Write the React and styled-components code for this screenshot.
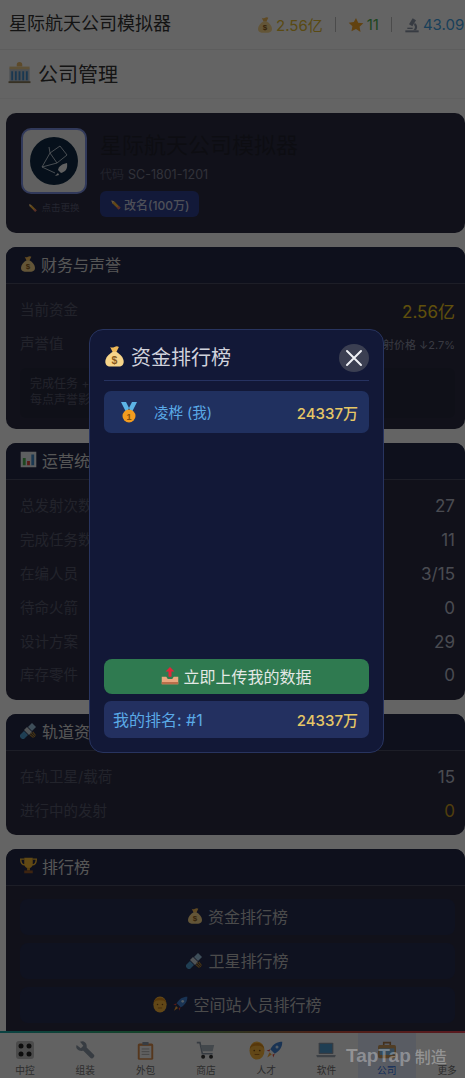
import React from 'react'
import styled, { createGlobalStyle } from 'styled-components'

const FONT = `Inter, "Noto Sans CJK SC", "Noto Sans", sans-serif`

const Global = createGlobalStyle`
  html, body { margin: 0; padding: 0; background: #fafafa; }
  body { font-family: ${FONT}; width: 465px; height: 1078px; overflow: hidden; }
  * { box-sizing: border-box; }
`

const Page = styled.div`
  position: relative;
  width: 465px;
  height: 1078px;
  overflow: hidden;
  display: flex;
  flex-direction: column;
  background: #fafafa;
`
const TopBar = styled.header`
  height: 50px;
  flex: none;
  display: flex;
  align-items: center;
  padding: 0 0 0 9px;
  gap: 26px;
  border-bottom: 1px solid #e8e8e8;
  white-space: nowrap;
`
const AppName = styled.h1`
  margin: 0 0 1px;
  font-size: 18px;
  font-weight: 400;
  color: #333;
  line-height: 26px;
  flex: none;
  width: 222px;
`
const Stats = styled.div`
  display: flex;
  align-items: center;
  flex: none;
`
const Stat = styled.span`
  display: inline-flex;
  align-items: center;
  gap: 3px;
  font-size: 15px;
  color: ${p => p.$color};
`
const StatSep = styled.i`
  width: 1px;
  height: 15px;
  background: #bbb;
  margin: 0 12px;
`
const PageTitle = styled.div`
  height: 49px;
  flex: none;
  display: flex;
  align-items: center;
  gap: 7px;
  padding: 0 0 2px 8px;
  font-size: 20px;
  font-weight: 400;
  color: #333;
  border-bottom: 1px solid #efefef;
`
const Content = styled.main`
  flex: 1;
  min-height: 0;
  padding: 14px 0 0 6px;
  display: flex;
  flex-direction: column;
  gap: 14px;
  overflow: hidden;
`
const Card = styled.section`
  flex: none;
  background: #2b2c42;
  border-radius: 10px;
  overflow: hidden;
  height: ${p => p.$h}px;
`
const CardHead = styled.div`
  height: 37px;
  display: flex;
  align-items: center;
  gap: 5px;
  padding: 0 14px 3px;
  font-size: 16px;
  font-weight: 400;
  color: #d8d8d8;
  background: #252a48;
  border-bottom: 1px solid #4a4c63;
`
const CardBody = styled.div`
  padding: ${p => p.$pad || '9.5px 10px 0 14px'};
`
const Row = styled.div`
  height: 33.8px;
  display: flex;
  align-items: center;
  justify-content: space-between;
`
const RowLabel = styled.span`
  font-size: 14.5px;
  color: #56586c;
  margin-bottom: 3px;
`
const RowValue = styled.span`
  font-size: 17px;
  color: ${p => p.$color || '#b9bccb'};
`
const SmallValue = styled.span`
  font-size: 11px;
  color: #8e90a4;
`
const Note = styled.div`
  margin-top: 7px;
  padding: 8px 10px;
  height: 50px;
  border-radius: 6px;
  background: #27293e;
  font-size: 12px;
  line-height: 16px;
  color: #56586c;
`
const Profile = styled.div`
  display: flex;
  gap: 13px;
  padding: 15px;
`
const LogoCol = styled.div`
  display: flex;
  flex-direction: column;
  align-items: center;
  gap: 3px;
  flex: none;
`
const LogoBox = styled.div`
  width: 66px;
  height: 66px;
  border-radius: 10px;
  background: #f1f1f1;
  border: 2px solid #7b8fe0;
  display: flex;
  align-items: center;
  justify-content: center;
`
const Hint = styled.span`
  display: inline-flex;
  align-items: center;
  gap: 4px;
  font-size: 9.5px;
  color: #5c5e78;
  margin-top: 3px;
`
const Info = styled.div`
  display: flex;
  flex-direction: column;
  align-items: flex-start;
  padding-top: 1px;
`
const CompanyName = styled.div`
  font-size: 22px;
  font-weight: 400;
  line-height: 32px;
  color: #22222f;
`
const Code = styled.div`
  font-size: 12px;
  line-height: 18px;
  margin-top: 5px;
  color: #55576e;
  b { font-weight: 400; font-size: 12.5px; color: #7b7d90; margin-left: 4px; }
`
const Rename = styled.div`
  margin-top: 7px;
  height: 26px;
  padding: 0 10px;
  border-radius: 6px;
  display: inline-flex;
  align-items: center;
  gap: 3px;
  background: #2e3f8f;
  font-size: 12px;
  font-weight: 500;
  color: #c4c8dc;
`
const RankButton = styled.div`
  height: 36px;
  margin-bottom: 8px;
  padding-bottom: 2px;
  border-radius: 8px;
  background: #262d52;
  display: flex;
  align-items: center;
  justify-content: center;
  gap: 5px;
  font-size: 16px;
  font-weight: 400;
  color: #bbb;
`
const TabBar = styled.nav`
  position: relative;
  height: 47px;
  flex: none;
  display: flex;
  gap: 2.3px;
  background: #f5f5f5;
  &::before {
    content: '';
    position: absolute;
    left: 0;
    right: 0;
    top: 0;
    height: 2px;
    background: linear-gradient(90deg, #1aa6a6, #3aa860 35%, #c2503c 70%, #e04050);
  }
`
const Tab = styled.div`
  flex: 0 0 58px;
  display: flex;
  flex-direction: column;
  align-items: center;
  justify-content: flex-end;
  gap: 2px;
  padding-bottom: 1px;
  font-size: 9.7px;
  color: ${p => (p.$active ? '#2f6fe0' : '#6f6f6f')};
  background: ${p => (p.$active ? '#dfe6f7' : 'transparent')};
  &:first-child { margin-left: -4px; }
`
const TabIcon = styled.div`
  height: 22px;
  display: flex;
  align-items: center;
  justify-content: center;
`
const Watermark = styled.div`
  position: absolute;
  left: 346px;
  bottom: 10px;
  display: flex;
  align-items: center;
  gap: 4px;
  color: rgba(255, 255, 255, 0.32);
  font-family: "Liberation Sans", "Noto Sans CJK SC", sans-serif;
  font-weight: 700;
  font-size: 19px;
  white-space: nowrap;
  span { font-size: 16px; font-weight: 500; }
`
const Overlay = styled.div`
  position: absolute;
  inset: 0;
  background: rgba(0, 0, 0, 0.6);
  display: flex;
  justify-content: center;
  padding-top: 329px;
  padding-left: 8px;
`
const Modal = styled.div`
  width: 295px;
  height: 424px;
  display: flex;
  flex-direction: column;
  padding: 9px 14px 14px;
  background: #121837;
  border: 1px solid #28345f;
  border-radius: 14px;
`
const ModalHead = styled.div`
  height: 42px;
  flex: none;
  display: flex;
  align-items: center;
  justify-content: space-between;
  border-bottom: 1px solid #263260;
  padding-bottom: 4px;
`
const ModalTitle = styled.div`
  display: flex;
  align-items: center;
  gap: 6px;
  font-size: 20px;
  font-weight: 400;
  color: #d0d2dc;
  padding-bottom: 2px;
`
const Close = styled.div`
  width: 30px;
  height: 28px;
  border-radius: 50%;
  background: #3b3f52;
  display: flex;
  align-items: center;
  justify-content: center;
`
const RankList = styled.div`
  flex: 1;
  padding-top: 10px;
`
const RankRow = styled.div`
  height: ${p => p.$h}px;
  display: flex;
  align-items: center;
  padding: 0 11px 0 ${p => p.$left}px;
  border-radius: 7px;
  background: ${p => p.$bg};
  color: #5aa9e6;
`
const RankName = styled.span`
  flex: 1;
  font-size: ${p => p.$size}px;
  font-weight: 400;
  margin-left: ${p => p.$gap}px;
  margin-bottom: 2px;
`
const RankAmount = styled.span`
  font-size: 15px;
  font-weight: 500;
  color: #e6c766;
`
const Upload = styled.div`
  height: 35px;
  flex: none;
  margin-bottom: 7px;
  padding-bottom: 2px;
  border-radius: 8px;
  background: #2f7a50;
  display: flex;
  align-items: center;
  justify-content: center;
  gap: 4px;
  font-size: 16px;
  font-weight: 400;
  color: #e3e8e5;
`

const Bag = ({ s = 16 }) => (
  <svg width={s} height={s} viewBox="0 0 24 24">
    <path d="M7 1c1.500 1 3 1 5 0s3.500-1 5 0l-3 6h-4z" fill="#f0b957" />
    <path d="M10 6.500h4c5 3 8.500 7 8.500 11.500 0 3-2 5.500-5.500 5.500H7c-3.500 0-5.500-2.500-5.500-5.500C1.500 13.500 5 9.500 10 6.500z" fill="#f7d58a" />
    <text x="12" y="20" fontSize="12" fontWeight="700" textAnchor="middle" fill="#8a5a1c" fontFamily="Liberation Sans">$</text>
  </svg>
)
const Star = () => (
  <svg width="16" height="16" viewBox="0 0 24 24">
    <path d="M12 1.500l3.300 7 7.700 1-5.600 5.300 1.400 7.700L12 18l-6.800 3.500 1.400-7.700L1 8.500l7.700-1z" fill="#f4a62a" />
  </svg>
)
const Microscope = () => (
  <svg width="16" height="16" viewBox="0 0 24 24" fill="#8a94a6">
    <path d="M13 2l5 3-5.500 9-5-3z" />
    <path d="M2 20h20v3H2z" />
    <path d="M16 9c4 2 5 7 2 11h-4c3-3 3-6 1-8z" />
    <path d="M5 16h8v2H5z" />
  </svg>
)
const Building = () => (
  <svg width="23" height="22" viewBox="0 0 24 24">
    <path d="M9 3a3 3 0 0 1 6 0v2H9z" fill="#e8b96a" />
    <path d="M1 7h22v15H1z" fill="#b9c2cc" />
    <path d="M1 5h22v3H1z" fill="#e7c88a" />
    <path d="M3 10h2v10H3zM7 10h2v10H7zM11 10h2v10h-2zM15 10h2v10h-2zM19 10h2v10h-2z" fill="#3f8bc9" />
    <path d="M0 21h24v2H0z" fill="#8a7a5a" />
  </svg>
)
const Pencil = ({ s = 11 }) => (
  <svg width={s} height={s} viewBox="0 0 24 24">
    <path d="M3 3l6 2 14 14-4 4L5 9z" fill="#f5b33c" />
    <path d="M3 3l6 2-4 4z" fill="#f2d6a8" />
    <path d="M19 15l4 4-4 4-4-4z" fill="#e2706a" />
  </svg>
)
const Medal = () => (
  <svg width="18" height="21" viewBox="0 0 18 21">
    <path d="M1 0h5l4 8-4 2zM17 0h-5L8 8l4 2z" fill="#5db4e6" />
    <circle cx="9" cy="14" r="6.500" fill="#f39c1f" />
    <text x="9" y="17.500" fontSize="9" fontWeight="700" textAnchor="middle" fill="#8a4f08" fontFamily="Liberation Sans">1</text>
  </svg>
)
const Tray = () => (
  <svg width="18" height="18" viewBox="0 0 24 24">
    <path d="M12 0l6 6h-4v7h-4V6H6z" fill="#e0263a" />
    <path d="M1 13h6l2 3h6l2-3h6v10H1z" fill="#e9a77e" />
    <path d="M1 20h22v3H1z" fill="#b96f4a" />
  </svg>
)
const Satellite = ({ s = 17 }) => (
  <svg width={s} height={s} viewBox="0 0 24 24">
    <g transform="rotate(-45 12 12)">
      <rect x="-3" y="8" width="10" height="8" fill="#4f9bd0" />
      <rect x="8" y="7" width="6" height="10" fill="#c9d2da" />
      <rect x="15" y="8" width="8" height="8" fill="#9cc4de" />
    </g>
    <path d="M15 15l6 6M18 14l4 5M14 18l5 4" stroke="#b9862c" strokeWidth="1.500" />
  </svg>
)
const Trophy = () => (
  <svg width="17" height="17" viewBox="0 0 24 24">
    <path d="M6 1h12v9a6 6 0 0 1-12 0z" fill="#f2b632" />
    <path d="M6 3H1c0 5 2 8 6 8M18 3h5c0 5-2 8-6 8" fill="none" stroke="#f2b632" strokeWidth="2" />
    <path d="M10 15h4v4h-4z" fill="#d89a20" />
    <path d="M6 19h12v4H6z" fill="#9a5a2a" />
  </svg>
)
const Chart = () => (
  <svg width="17" height="17" viewBox="0 0 24 24">
    <path d="M1 1h22v22H1z" fill="#e9edf0" />
    <path d="M4 10h4v10H4z" fill="#4caf50" />
    <path d="M10 14h4v6h-4z" fill="#e0453a" />
    <path d="M16 5h4v15h-4z" fill="#3f8bc9" />
  </svg>
)
const Face = ({ w = 16, h = 19 }) => (
  <svg width={w} height={h} viewBox="0 0 20 24">
    <ellipse cx="10" cy="12" rx="9.500" ry="11.500" fill="#f4b23a" />
    <path d="M1 10C2 0 18 0 19 10c-2-3-4-4-9-4s-7 1-9 4z" fill="#d98a1a" />
    <circle cx="6.500" cy="12" r="1.100" fill="#7a4a10" />
    <circle cx="13.500" cy="12" r="1.100" fill="#7a4a10" />
    <path d="M7 17h6" stroke="#a8651a" strokeWidth="1.200" />
  </svg>
)
const Rocket = ({ s = 18 }) => (
  <svg width={s} height={s} viewBox="0 0 24 24">
    <path d="M23 1c-7 0-12 3-16 10l6 6c7-4 10-9 10-16z" fill="#3f7fd0" />
    <circle cx="16" cy="8" r="2" fill="#cfe6fa" />
    <path d="M7 11l-5 2 4 1zM13 17l-2 5-1-4z" fill="#e0453a" />
    <path d="M6 15l3 3-6 4z" fill="#f2a63a" />
  </svg>
)
const Logo = () => (
  <svg width="48" height="48" viewBox="0 0 48 48">
    <circle cx="24" cy="24" r="24" fill="#0f2a44" />
    <path d="M19 10l1 6-8 14 13 6M20 16l10-7 7 9-10 8-7-10M27 26l-15 4" fill="none" stroke="#dfe6ee" strokeWidth=".8" />
    <path d="M37 26c-5 1-8 3-9 7l3 3c4-1 7-4 6-10z" fill="#f1f1f1" />
    <path d="M28 36l-3 3 4-1z" fill="#f1f1f1" />
  </svg>
)
const CloseX = () => (
  <svg width="18" height="18" viewBox="0 0 18 18">
    <path d="M2 2l14 14M16 2L2 16" stroke="#eef0f5" strokeWidth="2" strokeLinecap="round" />
  </svg>
)
const ConsoleIcon = () => (
  <svg width="18" height="18" viewBox="0 0 18 18">
    <rect width="18" height="18" rx="3" fill="#bbb" />
    {[[5, 5], [13, 5], [5, 13], [13, 13]].map(([x, y]) => (
      <circle key={x + '-' + y} cx={x} cy={y} r="2.500" fill="#222" />
    ))}
  </svg>
)
const Wrench = () => (
  <svg width="20" height="20" viewBox="0 0 24 24">
    <path d="M2 6l5 4 3-3-4-5c4-2 9 1 8 7l9 9c1 2-2 5-4 4l-9-9c-6 1-10-3-8-7z" fill="#8b97a5" />
  </svg>
)
const Clipboard = () => (
  <svg width="17" height="19" viewBox="0 0 22 24">
    <rect x="1" y="3" width="20" height="21" rx="2" fill="#d68a4a" />
    <rect x="3.500" y="6" width="15" height="16" fill="#f3f3f3" />
    <rect x="7" y="1" width="8" height="4" fill="#8b97a5" />
    <path d="M6 10h10M6 13.500h10M6 17h10" stroke="#999" />
  </svg>
)
const Cart = () => (
  <svg width="19" height="19" viewBox="0 0 24 24">
    <path d="M1 2h4l3 14h13" fill="none" stroke="#8b97a5" strokeWidth="2" />
    <path d="M6 5h17l-2 8H8z" fill="#a8b3bf" />
    <circle cx="9" cy="20" r="2.500" fill="#333" />
    <circle cx="19" cy="20" r="2.500" fill="#333" />
  </svg>
)
const Laptop = () => (
  <svg width="20" height="18" viewBox="0 0 24 22">
    <rect x="3" y="2" width="18" height="14" rx="1" fill="#8b97a5" />
    <rect x="4.500" y="3.500" width="15" height="11" fill="#4f9bd0" />
    <path d="M0 17h24l-1 3H1z" fill="#9aa4b0" />
  </svg>
)
const Briefcase = () => (
  <svg width="20" height="18" viewBox="0 0 24 22">
    <path d="M8 5V2h8v3" fill="none" stroke="#a8794a" strokeWidth="2" />
    <rect x="1" y="5" width="22" height="16" rx="2" fill="#c89a5c" />
    <rect x="3" y="9" width="18" height="8" fill="#7fb6e0" />
  </svg>
)

const tabs = [
  { label: '中控', icon: <ConsoleIcon /> },
  { label: '组装', icon: <Wrench /> },
  { label: '外包', icon: <Clipboard /> },
  { label: '商店', icon: <Cart /> },
  { label: '人才', icon: <><Face /><Rocket /></> },
  { label: '软件', icon: <Laptop /> },
  { label: '公司', icon: <Briefcase />, active: true },
  { label: '更多', icon: null },
]

const opsRows = [
  ['总发射次数', '27'],
  ['完成任务数', '11'],
  ['在编人员', '3/15'],
  ['待命火箭', '0'],
  ['设计方案', '29'],
  ['库存零件', '0'],
]

export default function App() {
  return (
    <Page>
      <Global />
      <TopBar>
        <AppName>星际航天公司模拟器</AppName>
        <Stats>
          <Stat $color="#e0b830"><Bag />2.56亿</Stat>
          <StatSep />
          <Stat $color="#4caf50"><Star />11</Stat>
          <StatSep />
          <Stat $color="#3f9fe0"><Microscope />43.09</Stat>
        </Stats>
      </TopBar>
      <PageTitle><Building />公司管理</PageTitle>
      <Content>
        <Card $h={120}>
          <Profile>
            <LogoCol>
              <LogoBox><Logo /></LogoBox>
              <Hint><Pencil s={9} />点击更换</Hint>
            </LogoCol>
            <Info>
              <CompanyName>星际航天公司模拟器</CompanyName>
              <Code>代码<b>SC-1801-1201</b></Code>
              <Rename><Pencil />改名(100万)</Rename>
            </Info>
          </Profile>
        </Card>
        <Card $h={182}>
          <CardHead><Bag />财务与声誉</CardHead>
          <CardBody>
            <Row><RowLabel>当前资金</RowLabel><RowValue $color="#f0c820">2.56亿</RowValue></Row>
            <Row><RowLabel>声誉值</RowLabel><SmallValue>发射价格 ↓2.7%</SmallValue></Row>
            <Note>完成任务 +<br />每点声誉影响</Note>
          </CardBody>
        </Card>
        <Card $h={257}>
          <CardHead><Chart />运营统计</CardHead>
          <CardBody>
            {opsRows.map(([label, value]) => (
              <Row key={label}><RowLabel>{label}</RowLabel><RowValue>{value}</RowValue></Row>
            ))}
          </CardBody>
        </Card>
        <Card $h={121}>
          <CardHead><Satellite />轨道资源</CardHead>
          <CardBody>
            <Row><RowLabel>在轨卫星/载荷</RowLabel><RowValue>15</RowValue></Row>
            <Row><RowLabel>进行中的发射</RowLabel><RowValue $color="#c79a20">0</RowValue></Row>
          </CardBody>
        </Card>
        <Card $h={200}>
          <CardHead><Trophy />排行榜</CardHead>
          <CardBody $pad="13px 10px 0 14px">
            <RankButton><Bag />资金排行榜</RankButton>
            <RankButton><Satellite />卫星排行榜</RankButton>
            <RankButton><Face w={14} h={17} /><Rocket s={16} />空间站人员排行榜</RankButton>
          </CardBody>
        </Card>
      </Content>
      <TabBar>
        {tabs.map(t => (
          <Tab key={t.label} $active={t.active}>
            <TabIcon>{t.icon}</TabIcon>
            {t.label}
          </Tab>
        ))}
      </TabBar>
      <Overlay>
        <Modal>
          <ModalHead>
            <ModalTitle><Bag s={21} />资金排行榜</ModalTitle>
            <Close><CloseX /></Close>
          </ModalHead>
          <RankList>
            <RankRow $h={42} $left={16} $bg="#20305f">
              <Medal />
              <RankName $size={14.5} $gap={16}>凌桦 (我)</RankName>
              <RankAmount>24337万</RankAmount>
            </RankRow>
          </RankList>
          <Upload><Tray />立即上传我的数据</Upload>
          <RankRow $h={37} $left={9} $bg="#233060">
            <RankName $size={16} $gap={0}>我的排名: #1</RankName>
            <RankAmount>24337万</RankAmount>
          </RankRow>
        </Modal>
      </Overlay>
      <Watermark>TapTap<span>制造</span></Watermark>
    </Page>
  )
}
